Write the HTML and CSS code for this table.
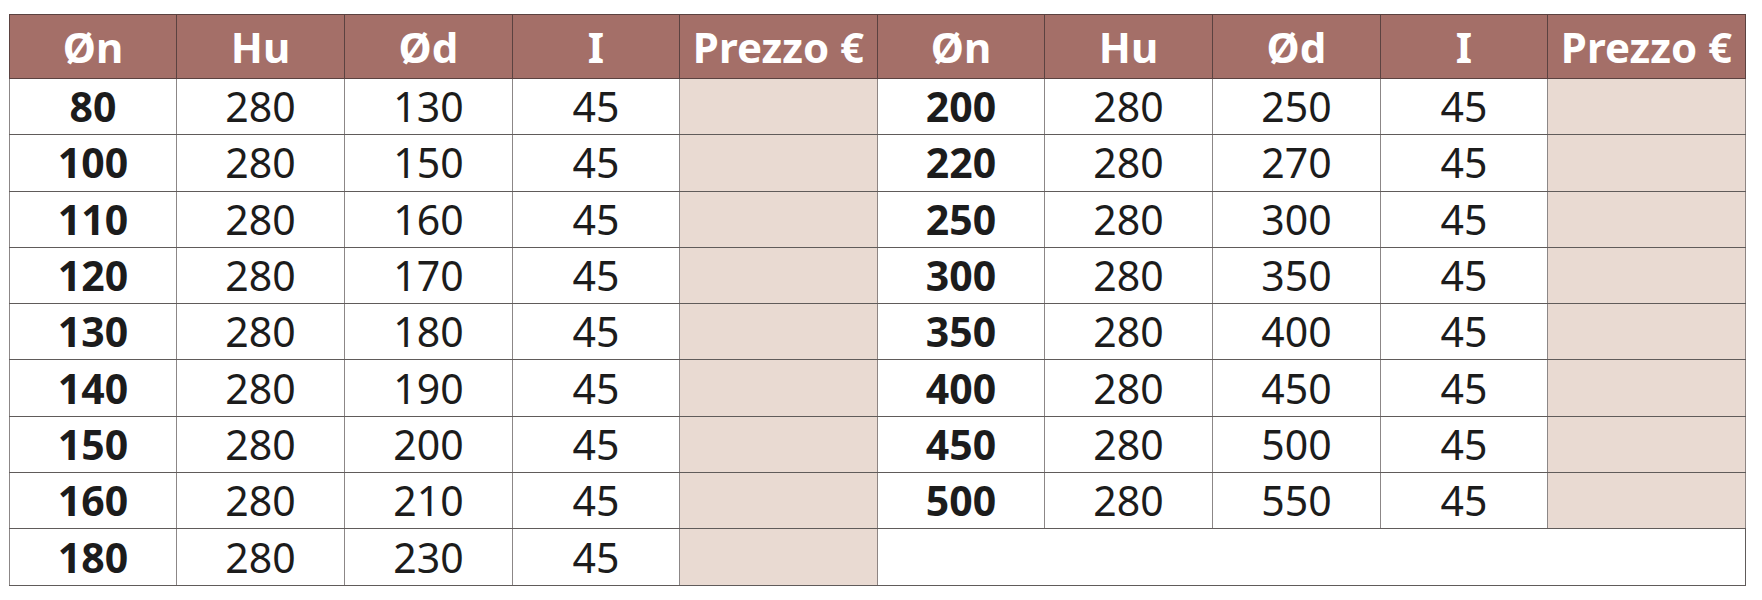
FILE: index.html
```html
<!DOCTYPE html>
<html lang="it">
<head>
<meta charset="utf-8">
<title>Tabella prezzi</title>
<link rel="stylesheet" href="styles.css">
</head>
<body>
<table class="grid">
  <colgroup>
    <col class="c-a"><col class="c-b"><col class="c-b"><col class="c-a"><col class="c-p">
    <col class="c-a"><col class="c-b"><col class="c-b"><col class="c-a"><col class="c-p">
  </colgroup>
  <thead>
    <tr class="head">
      <th>Øn</th><th>Hu</th><th>Ød</th><th>I</th><th class="sep">Prezzo €</th>
      <th>Øn</th><th>Hu</th><th>Ød</th><th>I</th><th>Prezzo €</th>
    </tr>
  </thead>
  <tbody>
    <tr><td class="n">80</td><td>280</td><td>130</td><td>45</td><td class="price"></td><td class="n">200</td><td>280</td><td>250</td><td>45</td><td class="price"></td></tr>
    <tr><td class="n">100</td><td>280</td><td>150</td><td>45</td><td class="price"></td><td class="n">220</td><td>280</td><td>270</td><td>45</td><td class="price"></td></tr>
    <tr><td class="n">110</td><td>280</td><td>160</td><td>45</td><td class="price"></td><td class="n">250</td><td>280</td><td>300</td><td>45</td><td class="price"></td></tr>
    <tr><td class="n">120</td><td>280</td><td>170</td><td>45</td><td class="price"></td><td class="n">300</td><td>280</td><td>350</td><td>45</td><td class="price"></td></tr>
    <tr><td class="n">130</td><td>280</td><td>180</td><td>45</td><td class="price"></td><td class="n">350</td><td>280</td><td>400</td><td>45</td><td class="price"></td></tr>
    <tr><td class="n">140</td><td>280</td><td>190</td><td>45</td><td class="price"></td><td class="n">400</td><td>280</td><td>450</td><td>45</td><td class="price"></td></tr>
    <tr><td class="n">150</td><td>280</td><td>200</td><td>45</td><td class="price"></td><td class="n">450</td><td>280</td><td>500</td><td>45</td><td class="price"></td></tr>
    <tr><td class="n">160</td><td>280</td><td>210</td><td>45</td><td class="price"></td><td class="n">500</td><td>280</td><td>550</td><td>45</td><td class="price"></td></tr>
    <tr><td class="n">180</td><td>280</td><td>230</td><td>45</td><td class="price"></td><td class="empty" colspan="5"></td></tr>
  </tbody>
</table>
</body>
</html>
```

FILE: styles.css
```css
html, body {
  margin: 0;
  background: #ffffff;
}
body {
  padding: 14px 0 0 9px;
  font-family: "Noto Sans", "Open Sans", "DejaVu Sans", sans-serif;
  color: #1c1c1c;
}
.grid {
  border-collapse: collapse;
  table-layout: fixed;
  width: 1737px;
}
.c-a { width: 167px; }
.c-b { width: 168px; }
.c-p { width: 198px; }
.grid th,
.grid td {
  padding: 0;
  text-align: center;
  vertical-align: middle;
  border: 1px solid #605b5a;
  border-left-color: #8c8787;
  border-right-color: #8c8787;
  font-size: 41px;
  line-height: 1;
}
.head {
  height: 64px;
}
.head th {
  background: #a46f68;
  color: #ffffff;
  font-weight: 700;
  font-size: 42px;
  border-color: #5b4240;
  white-space: nowrap;
}
.grid tbody tr {
  height: 56.3px;
}
.grid td {
  font-weight: 400;
}
.grid td.n {
  font-weight: 700;
}
.grid td.price {
  background: #e9dad2;
  border-left-color: #9a908d;
  border-right-color: #8e8583;
}
.grid td.empty {
  background: #ffffff;
  border-right-color: #605b5a;
}
```
